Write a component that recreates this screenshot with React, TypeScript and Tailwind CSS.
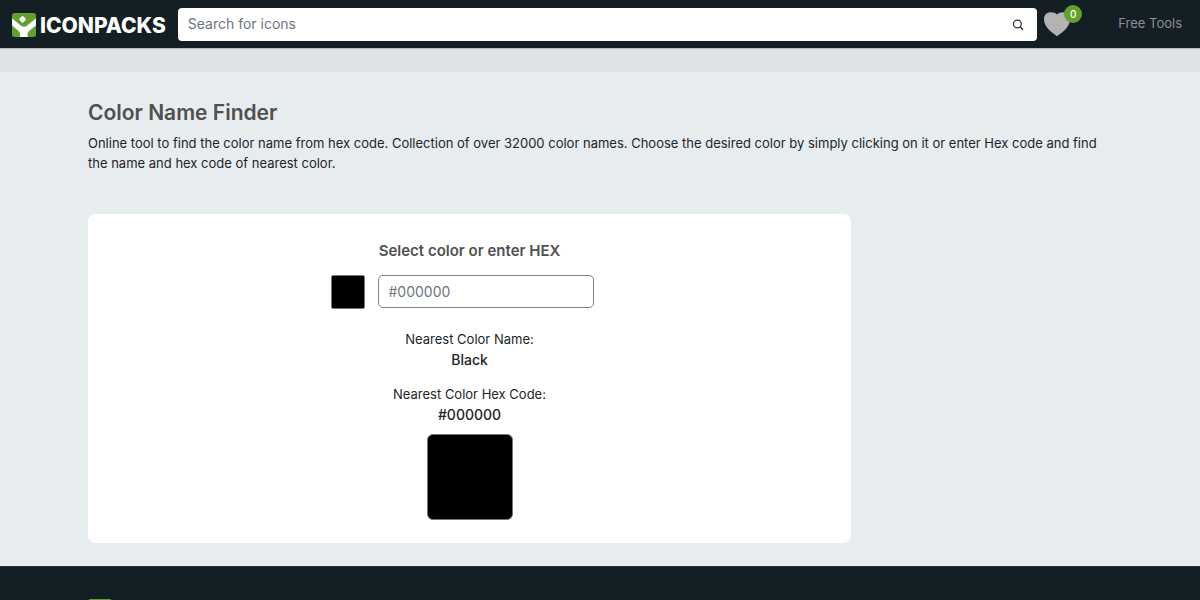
import React, { useState } from "react";

function LogoMark({ className }: { className?: string }) {
  return (
    <svg viewBox="0 0 24 24" className={className} aria-hidden="true">
      <rect width="24" height="24" rx="2.5" fill="#63a12d" />
      <path d="M0 5.2 L8.8 12.6 Q12 15 15.2 12.6 L24 5.2 V12.2 L16.6 18.6 Q15.6 19.6 15.6 21 V24 H8 V21 Q8 19.6 7 18.6 L0 12.2 Z" fill="#fff" />
      <rect x="7.9" y="3.6" width="5.4" height="5.4" rx="1.3" transform="rotate(45 10.6 6.3)" fill="#fff" />
    </svg>
  );
}

function Header() {
  return (
    <header className="flex h-12 items-center bg-[#141f25] pl-3 pr-[18px]">
      <a href="#" className="flex items-center gap-1 pt-0.5 text-white">
        <LogoMark className="size-6" />
        <span className="pt-0.5 text-[21px] leading-6 font-extrabold">ICONPACKS</span>
      </a>
      <form
        className="ml-3 flex h-[33px] flex-1 items-center rounded-[4px] bg-white pr-3 pl-2.5"
        onSubmit={(e) => e.preventDefault()}
      >
        <input
          type="search"
          aria-label="Search for icons"
          placeholder="Search for icons"
          className="min-w-0 flex-1 text-sm text-[#212529] outline-none placeholder:text-[#6c757d]"
        />
        <button type="submit" aria-label="Search">
          <svg viewBox="0 0 14 14" className="size-3.5" fill="none" stroke="#333" strokeWidth="1.2">
            <circle cx="6.4" cy="7" r="3.9" />
            <path d="M9.4 10 L11.6 12.2" strokeWidth="1.6" strokeLinecap="round" />
          </svg>
        </button>
      </form>
      <a href="#" aria-label="Favorites" className="relative ml-1.5 w-7">
        <svg viewBox="0 0 28 26" className="h-[26px] w-7" fill="#b3b3b3">
          <path d="M14 25.2 C8 21 1 15.5 1 8.2 C1 3.6 4 1.3 7.8 1.3 C10.5 1.3 12.6 2 14 3.4 C15.4 2 17.5 1.3 20.2 1.3 C24 1.3 27 3.6 27 8.2 C27 15.5 20 21 14 25.2 Z" />
        </svg>
        <span className="absolute -top-1.5 left-[21px] flex size-[18px] items-center justify-center rounded-full bg-[#63a12d] text-[10px] leading-none font-medium text-white">
          0
        </span>
      </a>
      <a href="#" className="ml-[47px] text-[13px] text-[#8a8f92]">
        Free Tools
      </a>
    </header>
  );
}

export default function App() {
  const [color, setColor] = useState("#000000");
  const [hex, setHex] = useState("");

  const updateHex = (value: string) => {
    setHex(value);
    if (/^#[0-9a-f]{6}$/i.test(value)) {
      setColor(value);
    }
  };

  return (
    <div className="min-h-screen bg-[#e7ecef] font-['Inter',sans-serif] text-[#212529]">
      <Header />
      <div className="h-6 border-t border-[#b5b9bc] bg-[#dee2e5]" />

      <main className="mx-auto max-w-[1200px] px-[88px] pt-7 pb-[23px]">
        <h1 className="text-[21px] leading-[26px] font-semibold text-[#505050]">Color Name Finder</h1>
        <p className="mt-[7px] text-[13px] leading-5">
          Online tool to find the color name from hex code. Collection of over 32000 color names.
          Choose the desired color by simply clicking on it or enter Hex code and find the name and
          hex code of nearest color.
        </p>

        <section className="mt-[41px] flex max-w-[763px] flex-col items-center rounded-lg bg-white pt-[27px] pb-[23px]">
          <h2 className="text-[15px] leading-5 font-semibold text-[#505050]">
            <label htmlFor="hex">Select color or enter HEX</label>
          </h2>

          <div className="mt-3.5 mr-[15px] flex items-start gap-[13px]">
            <input
              type="color"
              aria-label="Select color"
              value={color}
              onChange={(e) => updateHex(e.target.value)}
              className="size-[34px] appearance-none rounded-xs [&::-webkit-color-swatch]:rounded-xs [&::-webkit-color-swatch]:border [&::-webkit-color-swatch]:border-[#777] [&::-webkit-color-swatch-wrapper]:p-0"
            />
            <input
              id="hex"
              type="text"
              value={hex}
              placeholder="#000000"
              onChange={(e) => updateHex(e.target.value)}
              className="h-[33px] w-[216px] rounded-[5px] border border-[#808080] bg-white px-2.5 text-sm placeholder:text-[#6c757d]"
            />
          </div>

          <p className="mt-5 text-[13px] leading-5">Nearest Color Name:</p>
          <p className="text-sm leading-[21px] font-medium">Black</p>
          <p className="mt-3.5 text-[13px] leading-5">Nearest Color Hex Code:</p>
          <p className="text-sm leading-[21px] font-medium">{color}</p>
          <div
            className="mt-[9px] size-[86px] rounded-md border border-[#777]"
            style={{ backgroundColor: color }}
          />
        </section>
      </main>

      <footer className="border-t border-[#29343a] bg-[#141f25] py-8">
        <div className="mx-auto max-w-[1200px] px-[88px]">
          <LogoMark className="size-6" />
        </div>
      </footer>
    </div>
  );
}
